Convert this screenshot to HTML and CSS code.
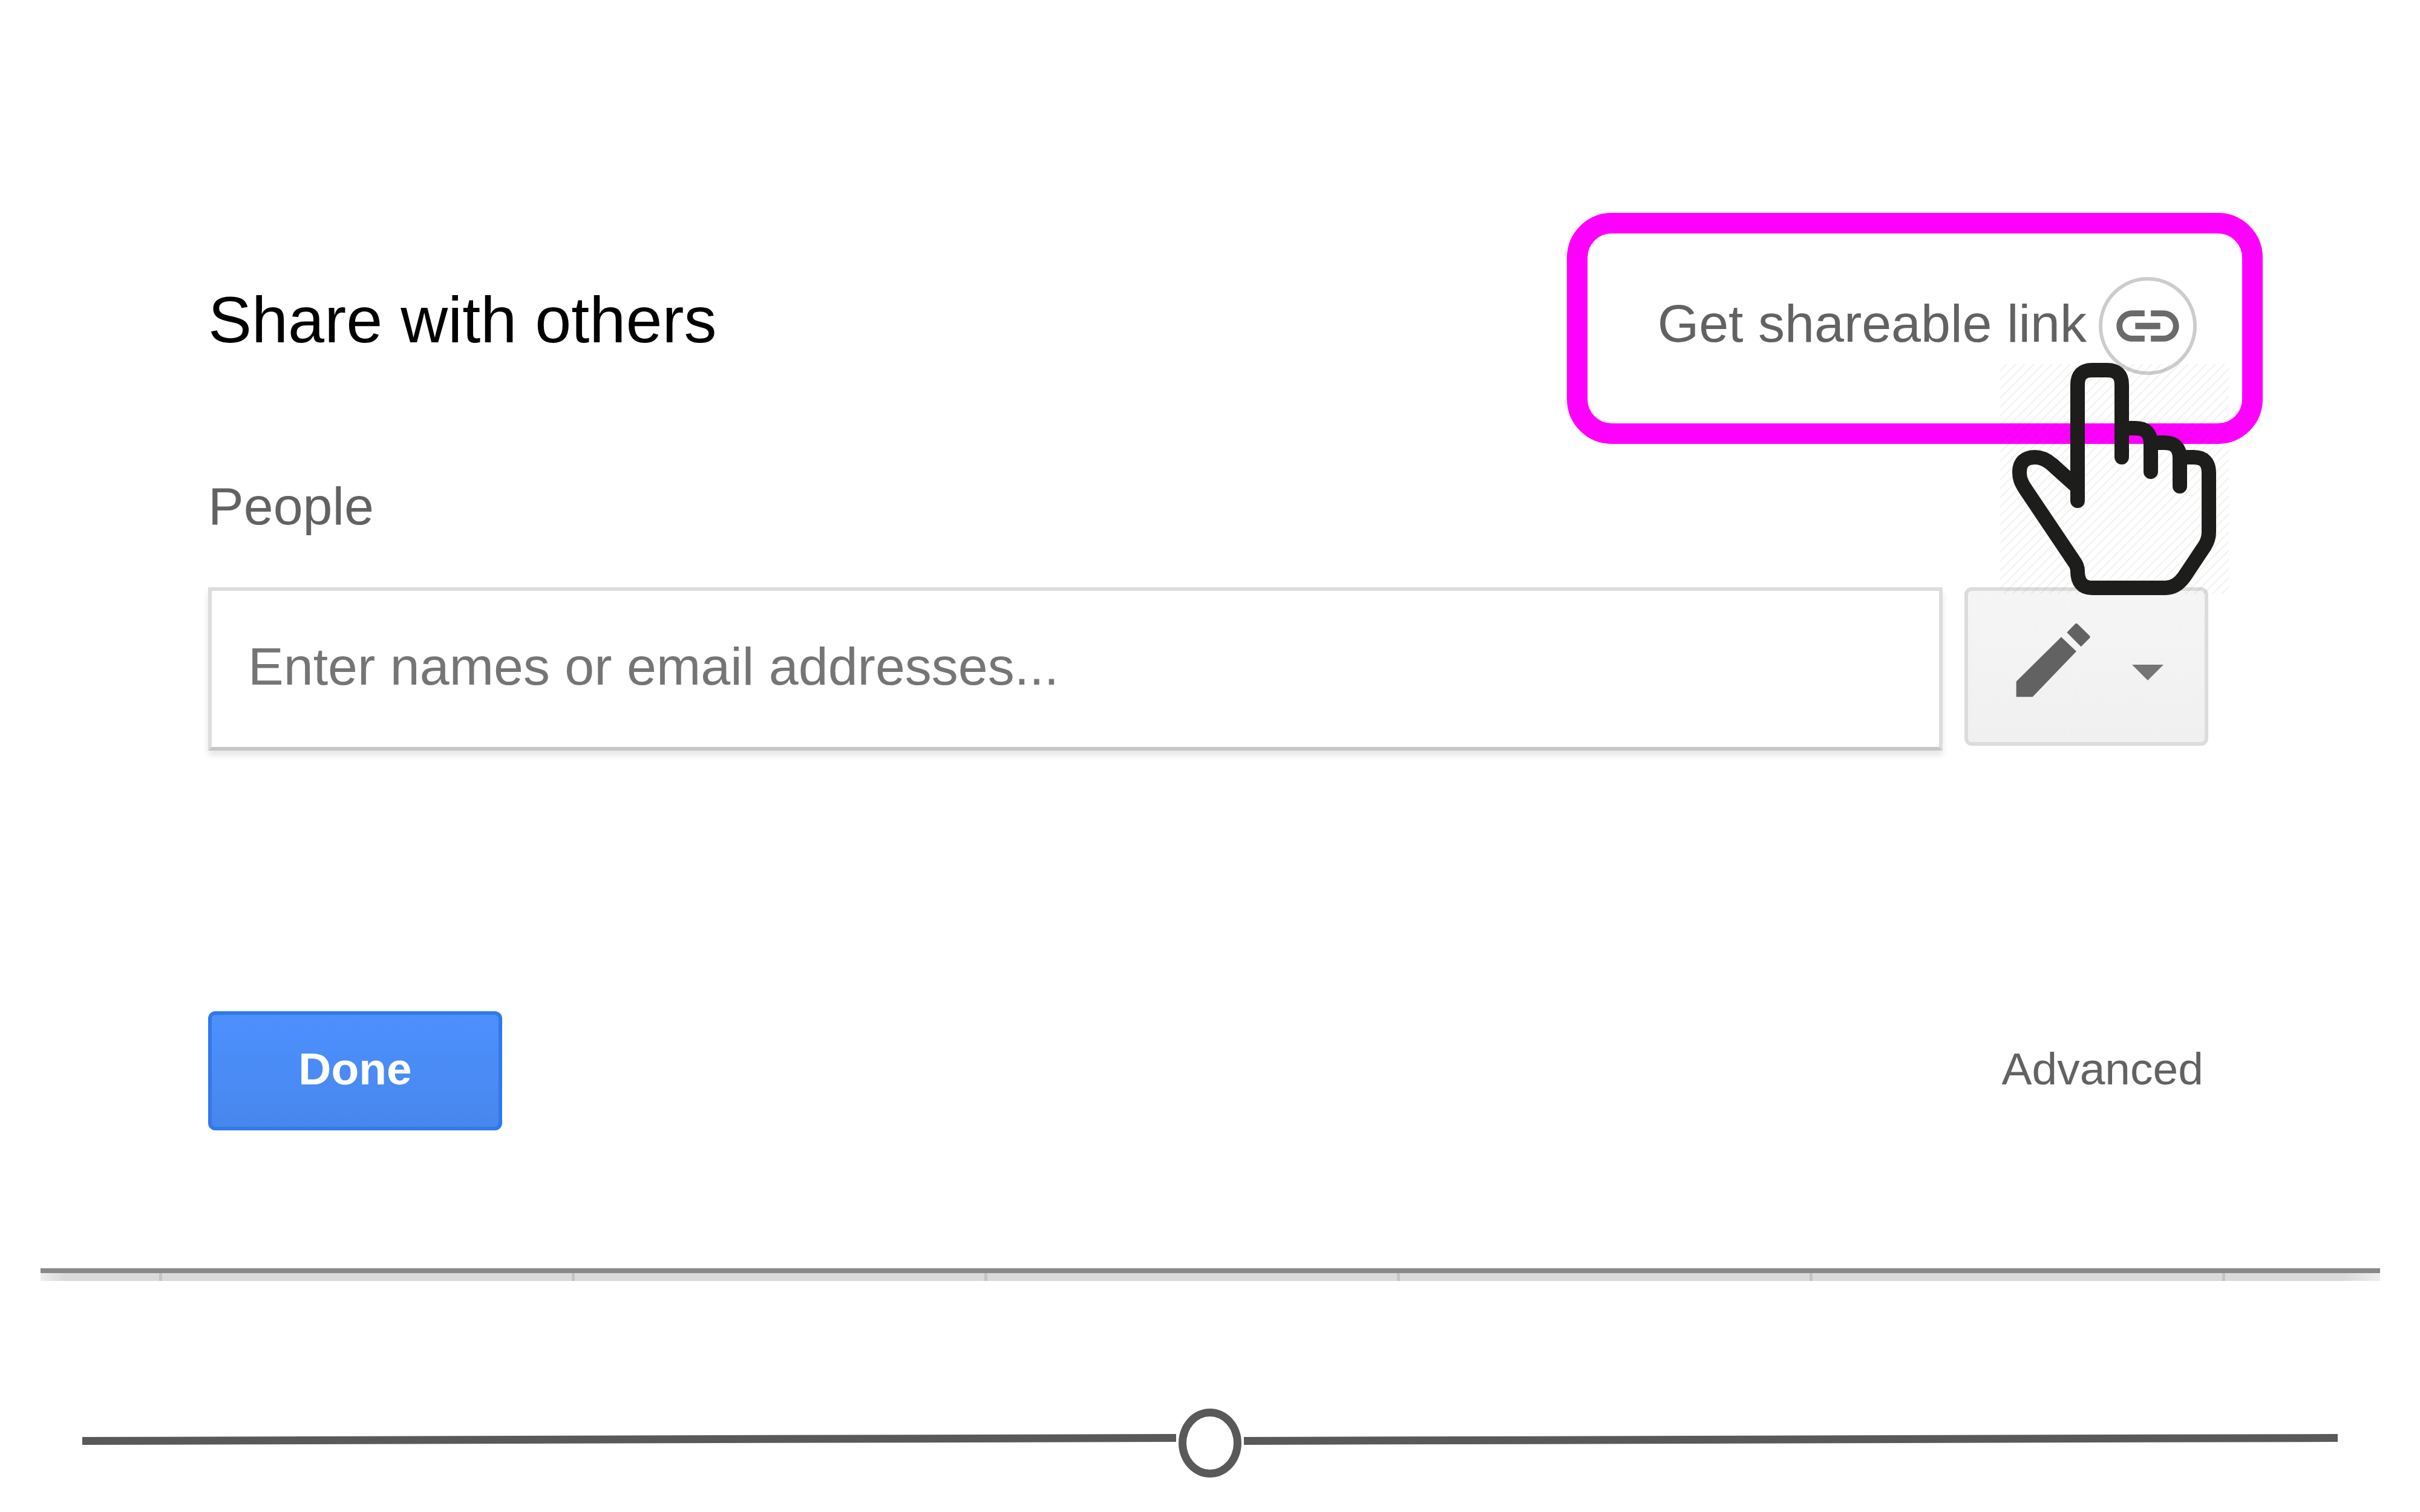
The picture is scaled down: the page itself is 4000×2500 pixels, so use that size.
FILE: index.html
```html
<!DOCTYPE html>
<html lang="en">
<head>
<meta charset="utf-8">
<title>Share with others</title>
<link rel="stylesheet" href="styles.css">
</head>
<body>
<main class="dialog">
  <header class="dialog-header">
    <h1 class="title">Share with others</h1>
    <div class="link-area">
      <button type="button" class="link-button">
        <span class="link-text">Get shareable link</span>
        <span class="link-badge">
          <svg class="link-icon" viewBox="0 0 24 24" aria-hidden="true"><path d="M3.900 12c0-1.710 1.390-3.100 3.100-3.100h4V7H7c-2.760 0-5 2.240-5 5s2.240 5 5 5h4v-1.900H7c-1.710 0-3.100-1.390-3.100-3.100zM8 13h8v-2H8v2zm9-6h-4v1.900h4c1.710 0 3.100 1.390 3.100 3.100s-1.390 3.100-3.100 3.100h-4V17h4c2.760 0 5-2.240 5-5s-2.240-5-5-5z"/></svg>
        </span>
      </button>
      <div class="highlight"></div>
      <svg class="pointer" viewBox="0 0 382 384" aria-hidden="true">
        <defs>
          <pattern id="hatch" width="15" height="15" patternUnits="userSpaceOnUse">
            <path d="M-3 3L3-3M0 15L15 0M12 18L18 12" stroke="#000" stroke-opacity=".05" stroke-width="2"/>
          </pattern>
        </defs>
        <g fill="none" stroke="#1d1d1b" stroke-width="24" stroke-linecap="round" stroke-linejoin="round">
          <path d="M130 228V36Q130 12 154 12H179Q203 12 203 36V156"/>
          <path d="M203 108H226Q251 108 251 134V180"/>
          <path d="M251 132H274Q299 132 299 158V204"/>
          <path d="M299 156H322Q347 156 347 182V280Q347 292 340 303L306 354Q293 372 275 372H154Q130 372 130 344Q130 336 124 328L44 209C36 197 34 190 34 181Q34 156 60 156Q74 156 88 168L128 204"/>
        </g>
        <rect x="2" y="2" width="378" height="380" fill="url(#hatch)"/>
      </svg>
    </div>
  </header>

  <form class="share-form">
    <label class="people-label" for="people">People</label>
    <div class="people-row">
      <input class="people-input" id="people" type="text" placeholder="Enter names or email addresses...">
      <button type="button" class="access-button" aria-label="Can edit">
        <svg class="pencil" viewBox="337 208 492 492" aria-hidden="true"><path d="M399 561L622 341L697 412L480 638H399zM650 318L690 277Q697 270 704 277L762 334Q768 340 762 347L720 389z"/></svg>
        <svg class="caret" viewBox="0 0 52 26" aria-hidden="true"><path d="M0 0h52L26 26z"/></svg>
      </button>
    </div>
    <div class="actions">
      <button type="button" class="done-button">Done</button>
      <a class="advanced" href="#">Advanced</a>
    </div>
  </form>
</main>

<div class="dialog-edge"></div>

<div class="divider">
  <svg class="divider-line" viewBox="0 0 100 18" preserveAspectRatio="none" aria-hidden="true"><path d="M0 5L100 0V13L0 18z"/></svg>
  <span class="divider-knob"></span>
  <svg class="divider-line" viewBox="0 0 100 18" preserveAspectRatio="none" aria-hidden="true"><path d="M0 5L100 0V13L0 18z"/></svg>
</div>
</body>
</html>
```
FILE: styles.css
```css
* {
  box-sizing: border-box;
}

body {
  margin: 0;
  background: #fff;
  color: #626262;
  font-family: "Liberation Sans", Arial, sans-serif;
  font-size: 88px;
  line-height: 100px;
}

button,
input {
  margin: 0;
  font: inherit;
  color: inherit;
}

.dialog {
  padding: 458px 350px 228px 344px;
}

.dialog-header {
  display: flex;
  justify-content: space-between;
  align-items: center;
}

.title {
  margin: 0;
  padding-bottom: 20px;
  color: #000;
  font-size: 108px;
  font-weight: 400;
  line-height: 140px;
}

.link-area {
  position: relative;
  padding-right: 19px;
}

.link-button {
  display: flex;
  align-items: center;
  gap: 20px;
  padding: 0;
  border: 0;
  background: none;
}

.link-text {
  padding-bottom: 8px;
}

.link-badge {
  display: flex;
  align-items: center;
  justify-content: center;
  width: 162px;
  height: 162px;
  border: 6px solid #ccc;
  border-radius: 50%;
}

.link-icon {
  flex: none;
  width: 124px;
  height: 124px;
  fill: #6a6a6a;
}

.highlight {
  position: absolute;
  inset: -106px -90px -114px -150px;
  border: 34px solid #f0f;
  border-radius: 74px;
  pointer-events: none;
}

.pointer {
  position: absolute;
  top: 142px;
  right: -36px;
  width: 382px;
  height: 384px;
  pointer-events: none;
}

.people-label {
  display: block;
  margin-top: 167px;
}

.people-row {
  display: flex;
  align-items: flex-start;
  gap: 36px;
  margin-top: 84px;
}

.people-input {
  flex: 1;
  min-width: 0;
  height: 270px;
  padding: 0 60px 8px;
  border: 6px solid #ddd;
  border-bottom-color: #c6c6c6;
  border-radius: 0;
  background: #fff;
  box-shadow: 0 8px 10px #0000001a;
}

.people-input::placeholder {
  color: #757575;
  opacity: 1;
}

.access-button {
  display: flex;
  align-items: center;
  justify-content: space-between;
  width: 403px;
  height: 262px;
  padding: 0 68px 22px 59px;
  border: 6px solid #dcdcdc;
  border-radius: 12px;
  background: linear-gradient(#f5f5f5, #f0f0f0);
}

.pencil {
  width: 164px;
  height: 164px;
  fill: #626262;
}

.caret {
  width: 52px;
  height: 26px;
  margin-top: 42px;
  fill: #757575;
}

.actions {
  display: flex;
  align-items: center;
  justify-content: space-between;
  margin-top: 431px;
  padding-right: 8px;
  font-size: 75px;
}

.done-button {
  width: 486px;
  height: 197px;
  padding: 0 0 8px;
  border: 6px solid #3079ed;
  border-radius: 12px;
  background: linear-gradient(#4d90fe, #4787ed);
  color: #fff;
  font-weight: 700;
}

.advanced {
  padding-bottom: 8px;
  color: inherit;
  text-decoration: none;
}

/* Lower edge of the dialog with its shadow over the page behind it. */
.dialog-edge {
  height: 21px;
  margin: 0 66px 0 67px;
  border-top: 8px solid #888;
  background:
    repeating-linear-gradient(90deg, transparent 0 196px, #c4c4c4 196px 201px, transparent 201px 682px),
    linear-gradient(90deg, #eee, #dadada 40px calc(100% - 60px), #eee);
}

.divider {
  display: flex;
  align-items: center;
  gap: 4px;
  margin: 211px 136px 0;
}

.divider-line {
  flex: 1;
  min-width: 0;
  height: 18px;
  margin-bottom: 12px;
  fill: #595959;
}

.divider-knob {
  width: 104px;
  height: 114px;
  border: 13px solid #595959;
  border-radius: 50%;
}
```
